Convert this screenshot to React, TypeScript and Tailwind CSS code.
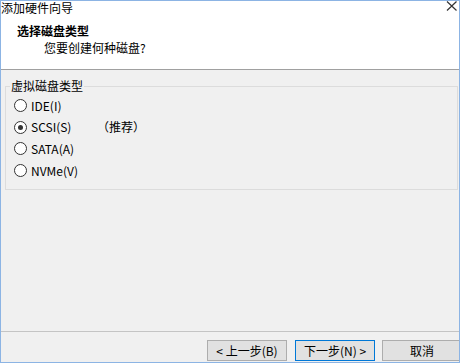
import { useState } from "react";

const options = [
  { id: "ide", label: "IDE(I)" },
  { id: "scsi", label: "SCSI(S)", hint: "（推荐）" },
  { id: "sata", label: "SATA(A)" },
  { id: "nvme", label: "NVMe(V)" },
];

function Radio({ checked }: { checked: boolean }) {
  return (
    <span className="w-[13px] h-[13px] rounded-full border border-[#333] bg-white flex items-center justify-center shrink-0">
      {checked && <span className="w-[5px] h-[5px] rounded-full bg-[#333]" />}
    </span>
  );
}

export default function App() {
  const [selected, setSelected] = useState("scsi");

  return (
    <div
      className="w-[461px] h-[363px] bg-white overflow-hidden text-[12px] text-black"
      style={{ fontFamily: '"Noto Sans CJK SC", "Noto Sans", sans-serif' }}
    >
      <div className="w-[460px] h-[363px] border border-[#8cb4e4] bg-[#f0f0f0] flex flex-col overflow-hidden">
        {/* header */}
        <div className="h-[69px] bg-white border-b border-[#a0a0a0] relative shrink-0">
          <div className="leading-[13px]">添加硬件向导</div>
          <svg className="absolute right-[1px] top-[0px]" width="12" height="10" viewBox="0 0 12 10">
            <path d="M1 0.5 L10.5 9.5 M10.5 0.5 L1 9.5" stroke="#333" strokeWidth="1.2" fill="none" />
          </svg>
          <div className="pl-[16px] mt-[9px] font-bold leading-[16px]">选择磁盘类型</div>
          <div className="pl-[43px] mt-[1px] leading-[16px]">您要创建何种磁盘?</div>
        </div>

        {/* group box */}
        <div className="mt-[16px] ml-[4px] mr-[1px] h-[104px] border border-[#dcdcdc] relative">
          <div className="absolute -top-[9px] left-[4px] px-[1px] bg-[#f0f0f0] leading-[16px]">虚拟磁盘类型</div>
          <div className="pt-[8px] pl-[8px] flex flex-col">
            {options.map((o) => (
              <label
                key={o.id}
                className="h-[21.6px] flex items-center gap-[4px] cursor-default"
                onClick={() => setSelected(o.id)}
              >
                <Radio checked={selected === o.id} />
                <span className="w-[62px] leading-[16px]">{o.label}</span>
                {o.hint && <span className="leading-[16px]">{o.hint}</span>}
              </label>
            ))}
          </div>
        </div>

        <div className="flex-1" />

        {/* footer */}
        <div className="border-t border-[#c4c4c4] h-[31px] shrink-0 flex items-start pt-[8px] pl-[206px]">
          <button className="w-[80px] h-[21px] shrink-0 bg-[#e1e1e1] border border-[#adadad] leading-[16px]">
            &lt; 上一步(B)
          </button>
          <button className="ml-[8px] w-[80px] h-[21px] shrink-0 bg-[#e1e1e1] border border-[#0078d7] leading-[16px]">
            下一步(N) &gt;
          </button>
          <button className="ml-[7px] w-[80px] h-[21px] shrink-0 bg-[#e1e1e1] border border-[#adadad] leading-[16px]">
            取消
          </button>
        </div>
      </div>
    </div>
  );
}
